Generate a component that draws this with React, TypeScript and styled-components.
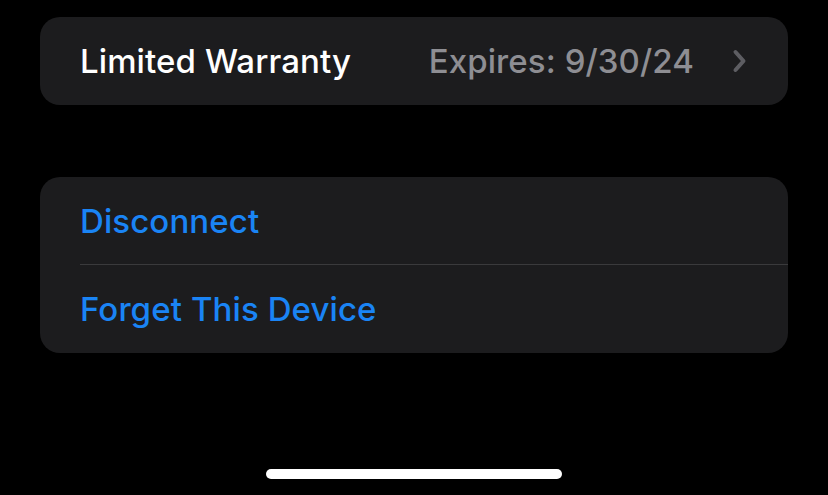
import React from "react";
import styled, { createGlobalStyle } from "styled-components";

const GlobalStyle = createGlobalStyle`
  html, body {
    margin: 0;
    padding: 0;
    background: #000000;
  }
  body {
    font-family: Inter, "Noto Sans", "Liberation Sans", sans-serif;
    -webkit-font-smoothing: antialiased;
  }
`;

const Screen = styled.div`
  width: 828px;
  height: 495px;
  background: #000000;
  display: flex;
  flex-direction: column;
  padding: 17px 40px 0;
  box-sizing: border-box;
  overflow: hidden;
`;

const Group = styled.div<{ $gap?: number }>`
  background: #1c1c1e;
  border-radius: 20px;
  margin-bottom: ${(p) => p.$gap ?? 0}px;
  overflow: hidden;
`;

const Row = styled.div<{ $divider?: boolean }>`
  height: 88px;
  margin-left: 40px;
  padding-right: 41px;
  display: flex;
  align-items: center;
  box-sizing: border-box;
  border-bottom: ${(p) => (p.$divider ? "1px solid #3a3a3c" : "none")};
`;

const Text = styled.span`
  font-size: 33px;
  font-weight: 500;
  letter-spacing: 0.1px;
`;

const Label = styled(Text)`
  color: #ffffff;
  flex: 1;
`;

const Value = styled(Text)`
  color: #8e8e93;
  margin-right: 38px;
`;

const Action = styled(Text)`
  color: #1a84f5;
`;

const Spacer = styled.div`
  flex: 1;
`;

const HomeIndicator = styled.div`
  width: 296px;
  height: 10px;
  border-radius: 5px;
  background: #ffffff;
  align-self: center;
  margin-bottom: 16px;
`;

const Chevron = () => (
  <svg width="15" height="24" viewBox="0 0 15 24">
    <path
      d="M3.5 3 L11.5 12 L3.5 21"
      fill="none"
      stroke="#5d5d62"
      strokeWidth="4"
      strokeLinecap="round"
      strokeLinejoin="round"
    />
  </svg>
);

export default function App() {
  return (
    <>
      <GlobalStyle />
      <Screen>
        <Group $gap={72}>
          <Row>
            <Label>Limited Warranty</Label>
            <Value>Expires: 9/30/24</Value>
            <Chevron />
          </Row>
        </Group>
        <Group>
          <Row $divider>
            <Action>Disconnect</Action>
          </Row>
          <Row>
            <Action>Forget This Device</Action>
          </Row>
        </Group>
        <Spacer />
        <HomeIndicator />
      </Screen>
    </>
  );
}
